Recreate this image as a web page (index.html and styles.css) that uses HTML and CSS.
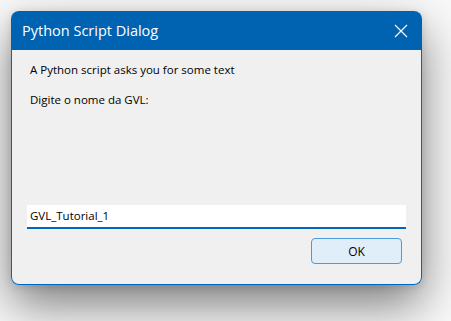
FILE: index.html
```html
<!DOCTYPE html>
<html lang="en">
<head>
    <meta charset="UTF-8">
    <title>Python Script Dialog</title>
    <link rel="stylesheet" href="styles.css">
</head>
<body>
    <div class="window">
        <div class="titlebar">
            <span class="title">Python Script Dialog</span>
            <svg class="close" width="14" height="14" viewBox="0 0 14 14">
                <path d="M1 1 L13 13 M13 1 L1 13" stroke="#fff" stroke-width="1.2" fill="none"/>
            </svg>
        </div>
        <div class="content">
            <p class="message">A Python script asks you for some text</p>
            <p class="prompt">Digite o nome da GVL:</p>
            <div class="spacer"></div>
            <input class="answer" type="text" value="GVL_Tutorial_1">
            <div class="buttons">
                <button class="ok">OK</button>
            </div>
        </div>
    </div>
</body>
</html>
```

FILE: styles.css
```css
html {
    background-color: #f9f9f9;
}
body {
    margin: 0;
    padding: 11px;
    height: 100vh;
    box-sizing: border-box;
    overflow: hidden;
    font-family: "Open Sans", "Noto Sans", sans-serif;
    font-size: 11.5px;
    color: #000;
}
.window {
    width: 411px;
    height: 274px;
    display: flex;
    flex-direction: column;
    border-radius: 8px;
    box-shadow: 0 20px 48px rgba(0, 0, 0, 0.5), 0 2px 10px rgba(0, 0, 0, 0.12);
}
.titlebar {
    height: 39px;
    flex: none;
    display: flex;
    align-items: center;
    justify-content: space-between;
    padding: 0 14px 0 11px;
    background-color: #0063b1;
    border-radius: 8px 8px 0 0;
    color: #fff;
}
.title {
    font-size: 14.5px;
}
.content {
    flex: 1;
    display: flex;
    flex-direction: column;
    padding: 0 15px 0 15px;
    background-color: #f0f0f0;
    border: 1px solid #0067c0;
    border-top: none;
    border-radius: 0 0 8px 8px;
}
.message {
    margin: 12px 0 0 3px;
}
.prompt {
    margin: 15px 0 0 3px;
}
.spacer {
    flex: 1;
}
.answer {
    height: 24px;
    box-sizing: border-box;
    margin: 0;
    padding: 0 3px 1px;
    border: none;
    border-bottom: 2px solid #0067c0;
    background-color: #fff;
    font-family: inherit;
    font-size: 11.5px;
    color: #000;
    outline: none;
}
.buttons {
    display: flex;
    justify-content: flex-end;
    padding: 9px 4px 20px 0;
}
.ok {
    width: 91px;
    height: 26px;
    background-color: #e0eef9;
    border: 1px solid #4a9ae0;
    border-radius: 4px;
    font-family: inherit;
    font-size: 12px;
    color: #000;
}
```
